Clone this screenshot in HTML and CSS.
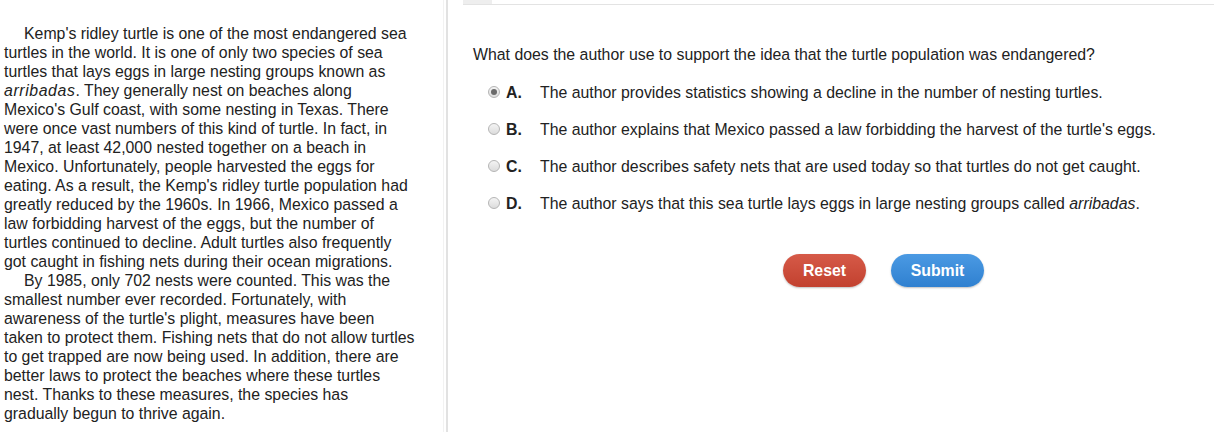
FILE: index.html
```html
<!DOCTYPE html>
<html>
<head>
<meta charset="utf-8">
<link rel="stylesheet" href="styles.css">
</head>
<body>
<div class="layout">
  <div class="passage">
    <p class="para">Kemp's ridley turtle is one of the most endangered sea turtles in the world. It is one of only two species of sea turtles that lays eggs in large nesting groups known as <em class="term">arribadas</em>. They generally nest on beaches along Mexico's Gulf coast, with some nesting in Texas. There were once vast numbers of this kind of turtle. In fact, in 1947, at least 42,000 nested together on a beach in Mexico. Unfortunately, people harvested the eggs for eating. As a result, the Kemp's ridley turtle population had greatly reduced by the 1960s. In 1966, Mexico passed a law forbidding harvest of the eggs, but the number of turtles continued to decline. Adult turtles also frequently got caught in fishing nets during their ocean migrations.</p>
    <p class="para">By 1985, only 702 nests were counted. This was the smallest number ever recorded. Fortunately, with awareness of the turtle's plight, measures have been taken to protect them. Fishing nets that do not allow turtles to get trapped are now being used. In addition, there are better laws to protect the beaches where these turtles nest. Thanks to these measures, the species has gradually begun to thrive again.</p>
  </div>
  <div class="splitter"></div>
  <div class="question-pane">
    <div class="tabs"><div class="tab"></div></div>
    <p class="prompt">What does the author use to support the idea that the turtle population was endangered?</p>
    <ul class="options">
      <li class="option"><span class="radio checked"></span><span class="letter">A.</span><span class="text">The author provides statistics showing a decline in the number of nesting turtles.</span></li>
      <li class="option"><span class="radio"></span><span class="letter">B.</span><span class="text">The author explains that Mexico passed a law forbidding the harvest of the turtle's eggs.</span></li>
      <li class="option"><span class="radio"></span><span class="letter">C.</span><span class="text">The author describes safety nets that are used today so that turtles do not get caught.</span></li>
      <li class="option"><span class="radio"></span><span class="letter">D.</span><span class="text">The author says that this sea turtle lays eggs in large nesting groups called <em>arribadas</em>.</span></li>
    </ul>
    <div class="actions">
      <button class="btn btn-reset">Reset</button>
      <button class="btn btn-submit">Submit</button>
    </div>
  </div>
</div>
</body>
</html>
```
FILE: styles.css
```css
html, body {
  margin: 0;
  padding: 0;
  background: #fff;
}
body {
  font-family: "Liberation Sans", Arial, sans-serif;
  font-size: 15.85px;
  line-height: 19px;
  color: #222;
}
.layout {
  display: flex;
  height: 432px;
  overflow: hidden;
}
.passage {
  width: 439px;
  padding: 24px 0 0 4px;
  border-right: 1px solid #f2f2f2;
  box-sizing: content-box;
}
.passage .para {
  margin: 0;
  width: 411px;
  text-indent: 20px;
}
.passage .term {
  letter-spacing: 0.6px;
}
.splitter {
  width: 2px;
  margin-left: 2px;
  background: #e2e2e2;
}
.question-pane {
  flex: 1;
  padding-left: 15px;
}
.tabs {
  height: 4px;
  border-bottom: 1px solid #e3e3e3;
  display: flex;
}
.tab {
  width: 29px;
  height: 4px;
  background: #eeeeee;
}
.prompt {
  margin: 40px 0 0 10px;
}
.options {
  list-style: none;
  margin: 19px 0 0 25px;
  padding: 0;
}
.option {
  display: flex;
  align-items: center;
  height: 19px;
  margin-bottom: 18px;
}
.radio {
  width: 10px;
  height: 10px;
  border-radius: 50%;
  border: 1px solid #b5b5b5;
  background: linear-gradient(#f4f4f4, #dcdcdc);
  margin-right: 6px;
  position: relative;
  top: -1px;
}
.radio.checked::after {
  content: "";
  position: absolute;
  left: 2px;
  top: 2px;
  width: 6px;
  height: 6px;
  border-radius: 50%;
  background: #6a6a6a;
}
.letter {
  font-weight: bold;
  width: 34px;
}
.actions {
  display: flex;
  gap: 25px;
  margin: 41px 0 0 320px;
}
.btn {
  font-family: "Liberation Sans", Arial, sans-serif;
  font-size: 15.85px;
  font-weight: bold;
  color: #fff;
  height: 33px;
  border: none;
  border-radius: 17px;
  padding: 0;
  box-shadow: 0 1px 2px rgba(0,0,0,0.25);
}
.btn-reset {
  width: 83px;
  background: linear-gradient(#d65a48, #c2412f);
}
.btn-submit {
  width: 93px;
  background: linear-gradient(#4b9ae3, #2f80d0);
}
```
